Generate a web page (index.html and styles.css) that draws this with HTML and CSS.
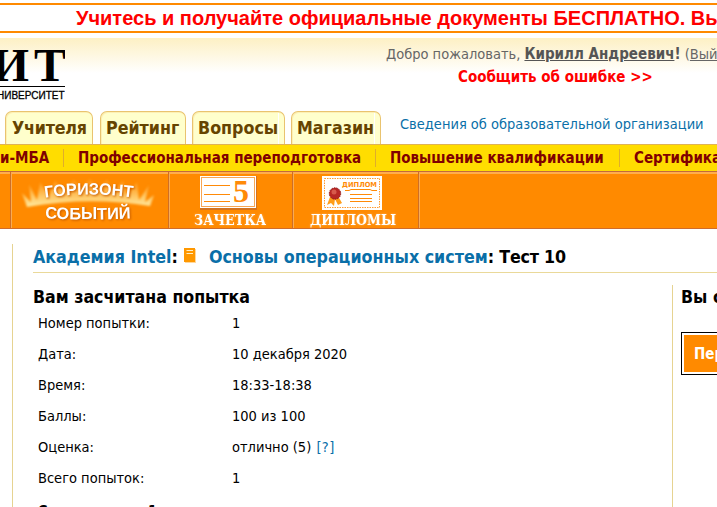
FILE: index.html
```html
<!DOCTYPE html>
<html lang="ru">
<head>
<meta charset="utf-8">
<title>Основы операционных систем: Тест 10</title>
<link rel="stylesheet" href="styles.css">
</head>
<body>
<div class="promo"><a>Учитесь и получайте официальные документы БЕСПЛАТНО. Выбирайте</a></div>
<header class="header">
  <div class="logo">
    <svg class="logo-name" width="65" height="42" viewBox="0 45 65 42">
      <text x="-8" y="81" textLength="37" lengthAdjust="spacingAndGlyphs">И</text>
      <text x="34" y="81" textLength="32" lengthAdjust="spacingAndGlyphs">Т</text>
      <path stroke="#000" d="M0 86.500H65"/>
    </svg>
    <div class="logo-sub">НИВЕРСИТЕТ</div>
  </div>
  <div class="user">
    <div class="welcome">Добро пожаловать, <b><u>Кирилл Андреевич</u>!</b> (<u>Выйти</u>)</div>
    <div class="report">Сообщить об ошибке &gt;&gt;</div>
  </div>
  <nav class="tabs">
    <a class="tab t1">Учителя</a>
    <a class="tab t2">Рейтинг</a>
    <a class="tab t3">Вопросы</a>
    <a class="tab t4">Магазин</a>
    <a class="info">Сведения об образовательной организации</a>
  </nav>
</header>
<nav class="programs">
  <a class="p1">и-МБА</a><a class="p2">Профессиональная переподготовка</a><a class="p3">Повышение квалификации</a><a class="p4">Сертификация</a>
</nav>
<nav class="services">
  <div class="cell c0"></div>
  <div class="cell c1">
    <svg width="157" height="55" viewBox="12 174 157 55">
      <defs>
        <linearGradient id="glow" gradientUnits="userSpaceOnUse" x1="0" y1="180" x2="0" y2="206">
          <stop offset="0" stop-color="#ffb347" stop-opacity=".2"/><stop offset=".6" stop-color="#ffc560"/><stop offset="1" stop-color="#ffe69a"/>
        </linearGradient>
        <filter id="soft"><feGaussianBlur stdDeviation=".8"/></filter>
        <path id="arc1" d="M44 198Q90 191 138 198"/>
        <path id="arc2" d="M44 218Q90 221 138 218"/>
      </defs>
      <path fill="url(#glow)" filter="url(#soft)" d="M28 207L23 193L32 202L30 184L38 200L41 182L50 196L56 180L64 192L75 179L82 189L91 178L99 189L108 179L115 192L124 180L128 196L138 182L140 200L150 185L146 202L155 195L151 206Q90 196 28 207Z"/>
      <g class="art-sans">
        <text><textPath href="#arc1" startOffset="2" textLength="88" lengthAdjust="spacingAndGlyphs">ГОРИЗОНТ</textPath></text>
        <text><textPath href="#arc2" startOffset="2" textLength="86" lengthAdjust="spacingAndGlyphs">СОБЫТИЙ</textPath></text>
      </g>
    </svg>
  </div>
  <div class="cell c2">
    <svg width="124" height="55" viewBox="169 174 124 55">
      <rect class="card-shade" x="200" y="176" width="57" height="34"/>
      <rect x="200" y="176" width="56" height="32" fill="#fff"/>
      <rect x="201.500" y="177.500" width="53" height="29" fill="none" stroke="#f7a655"/>
      <path stroke="#ff8a08" stroke-width="1.200" d="M204 185.500H230M204 194.500H230M204 201.500H230"/>
      <text class="five" x="233" y="202" textLength="16" lengthAdjust="spacingAndGlyphs">5</text>
      <text class="art-serif" x="194" y="225" textLength="72" lengthAdjust="spacingAndGlyphs">ЗАЧЕТКА</text>
    </svg>
  </div>
  <div class="cell c3">
    <svg width="125" height="55" viewBox="293 174 125 55">
      <rect x="322" y="176" width="60" height="34" fill="#fff"/>
      <rect x="324.500" y="178.500" width="55" height="29" fill="none" stroke="#ff9a30" stroke-dasharray="1.500 1"/>
      <text class="diploma" x="342" y="187" textLength="35" lengthAdjust="spacingAndGlyphs">ДИПЛОМ</text>
      <path fill="none" stroke="#ff8a08" d="M345 190.500H349L351 189.500H370L372 190.500H377M350 194.500H372M350 198.500H372M350 201.500H372"/>
      <path fill="#ff9d19" d="M330 197L327 205L331 203L334 206L335 199L338 205L342 203L338 196Z"/>
      <circle cx="335" cy="193.500" r="5.700" fill="#b82724" stroke="#8e1515" stroke-dasharray="1.500 1"/>
      <circle cx="334" cy="192" r="2.500" fill="#d75a4b"/>
      <text class="art-serif" x="310" y="225" textLength="86" lengthAdjust="spacingAndGlyphs">ДИПЛОМЫ</text>
    </svg>
  </div>
  <div class="cell c4"></div>
</nav>
<main class="page">
  <section class="content">
    <h1 class="crumbs"><a class="k1">Академия Intel</a>:
      <svg class="book" width="12" height="15" viewBox="0 0 12 15"><path fill="#ffd79b" d="M1 1H12V15H1Z"/><path fill="#ff9800" d="M0 0H11V14H0Z"/><path stroke="#fff0c8" d="M2.500 2.500H9M2.500 5.500H9"/></svg><a class="k2">Основы операционных систем</a><span class="k3">: Тест 10</span></h1>
    <div class="columns">
      <div class="result">
        <h2>Вам засчитана попытка</h2>
        <dl>
          <dt>Номер попытки:</dt><dd>1</dd>
          <dt>Дата:</dt><dd>10 декабря 2020</dd>
          <dt>Время:</dt><dd>18:33-18:38</dd>
          <dt>Баллы:</dt><dd>100 из 100</dd>
          <dt>Оценка:</dt><dd>отлично (5) <a>[?]</a></dd>
          <dt>Всего попыток:</dt><dd>1</dd>
          <dt class="total">Сдано тестов: 1</dt>
        </dl>
      </div>
      <aside class="next">
        <h2>Вы сдали</h2>
        <button>Перейти</button>
      </aside>
    </div>
  </section>
</main>
</body>
</html>
```
FILE: styles.css
```css
* { box-sizing: border-box; }
html, body { margin: 0; height: 507px; overflow: hidden; }
body {
  background: #fff;
  color: #000;
  font: 14.5px/18px "DejaVu Sans Condensed", "DejaVu Sans", sans-serif;
  font-stretch: condensed;
  white-space: nowrap;
}
a { text-decoration: none; }
h1, h2, dl, dd { margin: 0; }

.promo {
  height: 30px;
  margin-top: 3px;
  padding-left: 76px;
  border: solid #ff8a00;
  border-width: 2px 0;
  overflow: hidden;
  color: #f00;
  font: bold 20px/27px "Liberation Sans", sans-serif;
}

.header {
  display: grid;
  grid-template: 73px 33px / 370px 1fr;
  height: 106px;
  margin-top: 5px;
  background: linear-gradient(#fdf0c4, #fff 35px);
}
.logo { overflow: hidden; width: 65px; padding-top: 7px; }
.logo-name { display: block; font: bold 46px "Liberation Serif", serif; }
.logo-sub {
  height: 19px;
  margin-left: -3px;
  font: 10px/18px "Liberation Sans", sans-serif;
  -webkit-text-stroke: .3px #000;
}
.user { padding: 6px 0 0 16px; color: #666; }
.welcome { line-height: 20px; }
.welcome b { color: #555; font-size: 15px; }
.report { padding: 4px 0 0 72px; color: #f00; font-weight: bold; font-size: 15px; line-height: 19px; }

.tabs { grid-column: 1 / 3; display: flex; padding-left: 5px; }
.tab {
  height: 33px;
  margin-right: 7px;
  padding-left: 6px;
  border: 1px solid #e9c36f;
  border-bottom: 0;
  border-radius: 7px 7px 0 0;
  box-shadow: inset 1px 1px #fdf0b4;
  background: #ffc;
  color: #640;
  font-weight: bold;
  font-size: 17.7px;
  line-height: 32px;
}
.t1 { width: 88px; letter-spacing: -.2px; }
.t2 { width: 86px; padding-left: 5px; }
.t3 { width: 93px; margin-left: -1px; padding-left: 5px; }
.t4 { width: 90px; margin-left: -1px; padding-left: 5px; }
.t3, .t4 { background: linear-gradient(90deg, transparent calc(100% - 6px), #fff 0, #fff calc(100% - 5px), transparent 0) #ffc; }
.info { padding-left: 12px; line-height: 26px; color: #0a6fa8; }

.programs {
  display: flex;
  align-items: center;
  height: 27px;
  overflow: hidden;
  background: #fd0;
  border-top: 1px solid #dfb355;
  color: #800000;
  font-weight: bold;
  font-size: 15px;
}
.programs a { flex: none; height: 18px; border-left: 1px solid #dfad2b; padding-left: 14px; line-height: 19px; }
.programs .p1 { width: 63px; padding: 0; border: 0; }
.programs .p2 { width: 312px; }
.programs .p3 { width: 244px; }

.services {
  display: flex;
  height: 58px;
  background: #ff8a00;
  border-top: 1px solid #c3693b;
  border-bottom: 1px solid #d06c2a;
  box-shadow: inset 0 2px #ffae4d;
}
.cell { height: 56px; border-left: 1px solid #f8ab55; border-right: 1px solid #cf6e25; padding-top: 2px; }
.cell svg { display: block; margin-left: -1px; }
.c0 { width: 11px; border-left: 0; }
.c1 { width: 158px; }
.c2 { width: 124px; }
.c3 { width: 126px; }
.c4 { flex: 1; border-right: 0; }
.art-sans { fill: #fff; font: bold 16.5px "Liberation Sans", sans-serif; filter: drop-shadow(1px 1px 1px #c65b00); }
.art-serif { fill: #fff; font: bold 15px "DejaVu Serif Condensed", "DejaVu Serif", serif; filter: drop-shadow(0 0 1px #fff5); }
.five { fill: #ff8a08; font: bold 32px "Liberation Serif", serif; }
.diploma { fill: #ff8a08; font: bold 7px "DejaVu Sans", sans-serif; }
.card-shade { fill: #d4731f; }

.page { padding: 15px 0 0 12px; }
.content { height: 263px; padding-left: 20px; border-left: 1px solid #e6d391; }
.crumbs {
  display: flex;
  height: 29px;
  border-bottom: 1px solid #ead999;
  font-size: 17.7px;
  line-height: 26px;
}
.crumbs a, dd a { color: #0a6fa8; }
dd a { margin-left: 1px; letter-spacing: .4px; }
.k3 { letter-spacing: -.2px; }
.book { margin: 4px 13px 0 6px; }
.columns { display: flex; margin-top: 12px; }
.result { flex: none; width: 640px; height: 222px; border-right: 1px solid #e6d391; }
h2 { font-size: 17.6px; line-height: 24px; }
dl { display: grid; grid-template-columns: 194px 1fr; grid-auto-rows: 31px; padding: 0 0 0 5px; line-height: 31px; margin-top: -1px; }
.total { padding-top: 1px; font-weight: bold; }
.next { flex: none; padding-left: 8px; }
.next button {
  display: block;
  width: 120px;
  height: 43px;
  margin-top: 23px;
  padding: 0 0 0 12px;
  border: 1px solid #000;
  background: #ff8a00;
  box-shadow: inset 0 0 0 2px #fff;
  color: #fff;
  text-align: left;
  font: bold 15px "DejaVu Sans Condensed", "DejaVu Sans", sans-serif;
  font-stretch: condensed;
}
```
